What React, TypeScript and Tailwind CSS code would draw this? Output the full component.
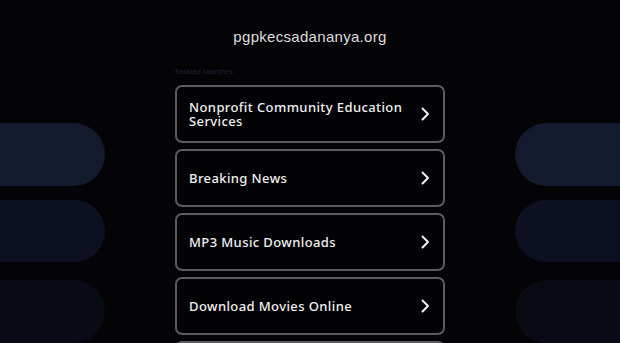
import React from 'react';

const links = [
  'Nonprofit Community Education Services',
  'Breaking News',
  'MP3 Music Downloads',
  'Download Movies Online',
  'Online Courses',
];

const pills = [
  { c: 'bg-[#141a2e]', m: 'mt-0' },
  { c: 'bg-[#0d1020]', m: 'mt-[14px]' },
  { c: 'bg-[#080a14]', m: 'mt-[18px]' },
];

const Chevron = () => (
  <svg width="14" height="14" viewBox="0 0 14 14" fill="none" className="shrink-0">
    <path d="M4.5 1.5 L10 7 L4.5 12.5" stroke="#f2f2f2" strokeWidth="2" strokeLinecap="round" strokeLinejoin="round" />
  </svg>
);

const SidePills = ({ side }: { side: 'left' | 'right' }) => (
  <div className="flex flex-col pt-[123px] w-[105px] shrink-0">
    {pills.map((p, i) => (
      <div
        key={i}
        className={`h-[67px] ${p.m} ${p.c} ${side === 'left' ? 'rounded-r-[34px]' : 'rounded-l-[34px]'}`}
      />
    ))}
  </div>
);

export default function App() {
  return (
    <div className="w-[620px] h-[343px] overflow-hidden bg-[#040407] flex justify-between font-['Noto_Sans',sans-serif]">
      <SidePills side="left" />

      {/* centre column */}
      <div className="w-[270px] flex flex-col items-stretch pt-[27px]">
        <h1 className="text-center text-[15px] leading-[20px] text-[#dedede] font-['Liberation_Sans',Arial,sans-serif] tracking-[0.3px]">
          pgpkecsadananya.org
        </h1>
        <p className="mt-[20px] text-[7px] leading-[10px] text-[#1b1d2b] font-semibold">Related searches</p>
        <div className="mt-[8px] flex flex-col gap-[6px]">
          {links.map((l) => (
            <div
              key={l}
              className="h-[58px] border-2 border-[#5c5c5f] rounded-[7px] bg-[#030305] flex items-center justify-between pl-[12px] pr-[11px]"
            >
              <span className="text-[13px] leading-[14px] font-medium text-[#f0f0f0] tracking-[0.4px] pr-2">{l}</span>
              <Chevron />
            </div>
          ))}
        </div>
      </div>

      <SidePills side="right" />
    </div>
  );
}
